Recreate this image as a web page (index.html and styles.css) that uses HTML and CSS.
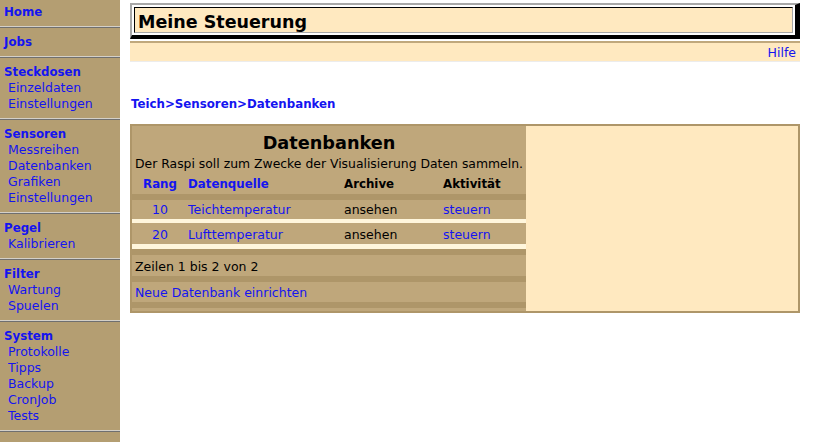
FILE: index.html
```html
<!DOCTYPE html>
<html lang="de">
<head>
<meta charset="utf-8">
<title>Meine Steuerung</title>
<link rel="stylesheet" href="styles.css">
</head>
<body>
<div class="page">
  <nav class="sidebar">
    <div class="sec"><a class="head" href="#">Home</a></div>
    <div class="sec"><a class="head" href="#">Jobs</a></div>
    <div class="sec">
      <a class="head" href="#">Steckdosen</a>
      <a class="item" href="#">Einzeldaten</a>
      <a class="item" href="#">Einstellungen</a>
    </div>
    <div class="sec">
      <a class="head" href="#">Sensoren</a>
      <a class="item" href="#">Messreihen</a>
      <a class="item" href="#">Datenbanken</a>
      <a class="item" href="#">Grafiken</a>
      <a class="item" href="#">Einstellungen</a>
    </div>
    <div class="sec">
      <a class="head" href="#">Pegel</a>
      <a class="item" href="#">Kalibrieren</a>
    </div>
    <div class="sec">
      <a class="head" href="#">Filter</a>
      <a class="item" href="#">Wartung</a>
      <a class="item" href="#">Spuelen</a>
    </div>
    <div class="sec">
      <a class="head" href="#">System</a>
      <a class="item" href="#">Protokolle</a>
      <a class="item" href="#">Tipps</a>
      <a class="item" href="#">Backup</a>
      <a class="item" href="#">CronJob</a>
      <a class="item" href="#">Tests</a>
    </div>
  </nav>
  <main class="main">
    <div class="titlebox">
      <div class="titlecell">Meine Steuerung</div>
    </div>
    <div class="helpbar"><a href="#">Hilfe</a></div>
    <div class="crumbs"><a href="#">Teich</a>&gt;<a href="#">Sensoren</a>&gt;<a href="#">Datenbanken</a></div>
    <div class="panel">
      <div class="content">
        <div class="ptitle">Datenbanken</div>
        <div class="desc">Der Raspi soll zum Zwecke der Visualisierung Daten sammeln.</div>
        <div class="row thead">
          <span class="c1"><a href="#">Rang</a></span>
          <span class="c2"><a href="#">Datenquelle</a></span>
          <span class="c3">Archive</span>
          <span class="c4">Aktivität</span>
        </div>
        <div class="band"></div>
        <div class="row data r1">
          <span class="c1"><a href="#">10</a></span>
          <span class="c2"><a href="#">Teichtemperatur</a></span>
          <span class="c3">ansehen</span>
          <span class="c4"><a href="#">steuern</a></span>
        </div>
        <div class="line"></div>
        <div class="row data r2">
          <span class="c1"><a href="#">20</a></span>
          <span class="c2"><a href="#">Lufttemperatur</a></span>
          <span class="c3">ansehen</span>
          <span class="c4"><a href="#">steuern</a></span>
        </div>
        <div class="line line2"></div>
        <div class="band"></div>
        <div class="foot">Zeilen 1 bis 2 von 2</div>
        <div class="band"></div>
        <div class="foot foot2"><a href="#">Neue Datenbank einrichten</a></div>
        <div class="band"></div>
      </div>
      <div class="aside"></div>
    </div>
  </main>
</div>
</body>
</html>
```
FILE: styles.css
```css
html, body {
  margin: 0;
  padding: 0;
  background: #ffffff;
}
body {
  font-family: "DejaVu Sans", Verdana, sans-serif;
  font-size: 12.5px;
  line-height: 16px;
  color: #000;
}
a {
  color: #1414f0;
  text-decoration: none;
}
.page {
  display: flex;
  align-items: flex-start;
}
.sidebar {
  width: 120px;
  min-height: 442px;
  background: #b49e72;
  padding-top: 4px;
  box-sizing: border-box;
  flex: none;
}
.sec {
  display: flex;
  flex-direction: column;
  padding: 0 0 6px 4px;
  margin-bottom: 7px;
  border-bottom: 1px solid #d4d0c8;
  box-shadow: 0 1px 0 #6f6f6f;
}
.sec .head {
  font-weight: bold;
  font-size: 11.8px;
}
.sec .item {
  padding-left: 4px;
}
.main {
  margin-left: 10px;
  width: 670px;
  padding-top: 3px;
}
.titlebox {
  border-top: 2px solid #a8a8a8;
  border-left: 2px solid #a8a8a8;
  border-right: 5px solid #000;
  border-bottom: 4px solid #000;
  padding: 2px;
}
.titlecell {
  border-top: 1px solid #000;
  border-left: 1px solid #000;
  border-right: 1px solid #a8a8a8;
  border-bottom: 1px solid #a8a8a8;
  background: #ffe9c0;
  font-size: 17.5px;
  font-weight: bold;
  line-height: 25px;
  padding: 2px 0 0 3px;
  height: 26px;
  box-sizing: border-box;
}
.helpbar {
  margin-top: 2px;
  border-top: 2px solid #c0a87c;
  border-bottom: 1px solid #ececec;
  background: #ffe9c0;
  text-align: right;
  padding-right: 4px;
  height: 18px;
  line-height: 20px;
}
.crumbs {
  margin-top: 34px;
  font-weight: bold;
  font-size: 11.8px;
  color: #1414f0;
  padding-left: 1px;
}
.panel {
  margin-top: 12px;
  border: 2px solid #ae9669;
  display: flex;
  height: 185px;
}
.content {
  width: 394px;
  background: #bfa77b;
  padding-top: 4px;
  box-sizing: border-box;
}
.aside {
  flex: 1;
  background: #ffe9c0;
}
.ptitle {
  text-align: center;
  font-size: 17.7px;
  font-weight: bold;
  line-height: 26px;
}
.desc {
  padding-left: 3px;
  font-size: 12.4px;
  white-space: nowrap;
}
.row {
  display: flex;
}
.c1 {
  width: 56px;
  text-align: center;
  flex: none;
}
.c2 {
  width: 150px;
  box-sizing: border-box;
  flex: none;
}
.c3 {
  width: 105px;
  padding-left: 6px;
  box-sizing: border-box;
  flex: none;
}
.c4 {
  flex: 1;
}
.thead {
  height: 22px;
  padding-top: 4px;
  box-sizing: border-box;
  font-weight: bold;
  font-size: 11.8px;
}
.band {
  height: 6px;
  background: #ae9669;
}
.data {
  height: 19px;
  padding-top: 2px;
  box-sizing: border-box;
}
.data.r2 {
  height: 21px;
  padding-top: 4px;
}
.line {
  height: 4px;
  background: #fff6dc;
}
.line.line2 {
  height: 5px;
}
.foot {
  height: 21px;
  padding: 4px 0 0 3px;
  box-sizing: border-box;
  white-space: nowrap;
}
.foot.foot2 {
  height: 20px;
  padding-top: 3px;
}
```
